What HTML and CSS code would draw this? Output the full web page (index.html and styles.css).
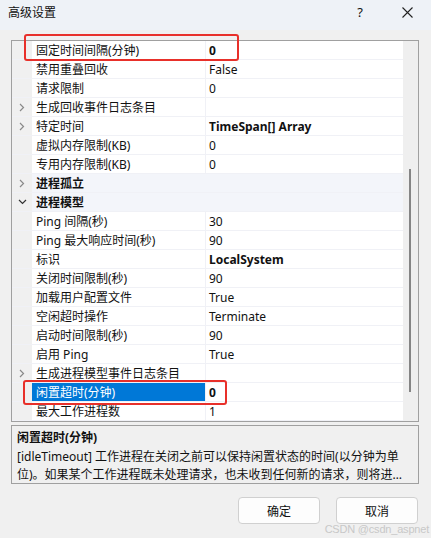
FILE: index.html
```html
<!DOCTYPE html>
<html>
<head>
<meta charset="utf-8">
<link rel="stylesheet" href="styles.css">
</head>
<body>
<div class="window">
  <div class="titlebar">
    <span class="title">高级设置</span>
    <span class="tb-help">?</span>
    <span class="tb-close"><svg width="11" height="11" viewBox="0 0 11 11"><path d="M0.5 0.5 L10.5 10.5 M10.5 0.5 L0.5 10.5" stroke="#222" stroke-width="1.1" fill="none"/></svg></span>
  </div>
  <div class="main">
    <div class="grid">
      <div class="rows">
        <div class="row"><span class="m"></span><span class="n">固定时间间隔(分钟)</span><span class="v b">0</span></div>
        <div class="row"><span class="m"></span><span class="n">禁用重叠回收</span><span class="v">False</span></div>
        <div class="row"><span class="m"></span><span class="n">请求限制</span><span class="v">0</span></div>
        <div class="row"><span class="m"><svg class="chev" width="6" height="9" viewBox="0 0 6 9"><path d="M1 1 L4.5 4.5 L1 8" stroke="#8a8a8a" stroke-width="1.2" fill="none"/></svg></span><span class="n">生成回收事件日志条目</span><span class="v"></span></div>
        <div class="row"><span class="m"><svg class="chev" width="6" height="9" viewBox="0 0 6 9"><path d="M1 1 L4.5 4.5 L1 8" stroke="#8a8a8a" stroke-width="1.2" fill="none"/></svg></span><span class="n">特定时间</span><span class="v b">TimeSpan[] Array</span></div>
        <div class="row"><span class="m"></span><span class="n">虚拟内存限制(KB)</span><span class="v">0</span></div>
        <div class="row"><span class="m"></span><span class="n">专用内存限制(KB)</span><span class="v">0</span></div>
        <div class="row cat"><span class="m"><svg class="chev" width="6" height="9" viewBox="0 0 6 9"><path d="M1 1 L4.5 4.5 L1 8" stroke="#8a8a8a" stroke-width="1.2" fill="none"/></svg></span><span class="c">进程孤立</span></div>
        <div class="row cat"><span class="m"><svg class="chev" width="9" height="6" viewBox="0 0 9 6"><path d="M1 1 L4.5 4.5 L8 1" stroke="#333" stroke-width="1.2" fill="none"/></svg></span><span class="c">进程模型</span></div>
        <div class="row"><span class="m"></span><span class="n">Ping 间隔(秒)</span><span class="v">30</span></div>
        <div class="row"><span class="m"></span><span class="n">Ping 最大响应时间(秒)</span><span class="v">90</span></div>
        <div class="row"><span class="m"></span><span class="n">标识</span><span class="v b">LocalSystem</span></div>
        <div class="row"><span class="m"></span><span class="n">关闭时间限制(秒)</span><span class="v">90</span></div>
        <div class="row"><span class="m"></span><span class="n">加载用户配置文件</span><span class="v">True</span></div>
        <div class="row"><span class="m"></span><span class="n">空闲超时操作</span><span class="v">Terminate</span></div>
        <div class="row"><span class="m"></span><span class="n">启动时间限制(秒)</span><span class="v">90</span></div>
        <div class="row"><span class="m"></span><span class="n">启用 Ping</span><span class="v">True</span></div>
        <div class="row"><span class="m"><svg class="chev" width="6" height="9" viewBox="0 0 6 9"><path d="M1 1 L4.5 4.5 L1 8" stroke="#8a8a8a" stroke-width="1.2" fill="none"/></svg></span><span class="n">生成进程模型事件日志条目</span><span class="v"></span></div>
        <div class="row sel"><span class="m"></span><span class="n">闲置超时(分钟)</span><span class="v b">0</span></div>
        <div class="row"><span class="m"></span><span class="n">最大工作进程数</span><span class="v">1</span></div>
      </div>
      <div class="scroll"><div class="thumb"></div></div>
    </div>
    <div class="desc">
      <div class="desc-title">闲置超时(分钟)</div>
      <div class="desc-text">[idleTimeout] 工作进程在关闭之前可以保持闲置状态的时间(以分钟为单位)。如果某个工作进程既未处理请求，也未收到任何新的请求，则将进…</div>
    </div>
    <div class="buttons">
      <button class="btn">确定</button>
      <button class="btn">取消</button>
    </div>
  </div>
  <div class="mark mark1"></div>
  <div class="mark mark2"></div>
  <div class="watermark">CSDN @csdn_aspnet</div>
</div>
</body>
</html>
```
FILE: styles.css
```css
* { box-sizing: border-box; }
html, body { margin: 0; padding: 0; }
body {
  width: 431px;
  height: 538px;
  background: #f0f0f0;
  font-family: "Noto Sans", "Noto Sans CJK SC", sans-serif;
  font-size: 12px;
  color: #111;
  overflow: hidden;
}
.window { position: relative; width: 431px; height: 538px; }
.titlebar {
  height: 30px;
  background: #eef2f7;
  display: flex;
  align-items: center;
  padding-left: 8px;
}
.title { flex: 1; font-size: 12px; color: #111; margin-top: -7px; }
.tb-help { width: 20px; text-align: center; font-size: 13px; margin-right: 25px; margin-top: -6px; }
.tb-close { width: 24px; margin-right: 12px; display: flex; justify-content: center; margin-top: -6px; }
.main { padding: 10px 12px 0 11px; }
.grid {
  border: 1px solid #a0a0a0;
  height: 382px;
  display: flex;
  background: #efefef;
}
.rows { width: 391px; background: #fff; }
.row {
  display: flex;
  height: 19px;
  line-height: 18px;
  padding-top: 1px;
  border-bottom: 1px solid #f0f1f6;
}
.m {
  width: 20px;
  background: #f0f0f0;
  display: flex;
  align-items: center;
  justify-content: center;
  flex: none;
  margin-top: -1px;
}
.n {
  width: 174px;
  flex: none;
  padding-left: 4px;
  border-right: 1px solid #f0f1f6;
  white-space: nowrap;
  overflow: hidden;
  margin-top: -1px;
  padding-top: 1px;
}
.v { flex: 1; padding-left: 3px; white-space: nowrap; }
.b { font-weight: bold; }
.cat { background: #f3f5fa; }
.cat .c { padding-left: 4px; font-weight: bold; }
.sel .n { background: #0078d7; color: #fff; }
.scroll { flex: 1; position: relative; }
.thumb {
  position: absolute;
  left: 6px;
  top: 128px;
  width: 2px;
  height: 223px;
  background: #858585;
}
.desc {
  margin-top: 3px;
  height: 59px;
  border: 1px solid #a0a0a0;
  padding: 3px 4px 0 5px;
  line-height: 18.5px;
}
.desc-title { font-weight: bold; }
.desc-text { width: 390px; }
.buttons {
  display: flex;
  justify-content: flex-end;
  gap: 16px;
  margin-top: 13px;
  padding-right: 1px;
}
.btn {
  width: 82px;
  height: 27px;
  border: 1px solid #d0d0d0;
  border-radius: 4px;
  background: #fdfdfd;
  font-family: "Noto Sans CJK SC", sans-serif;
  font-size: 12px;
  color: #111;
  padding: 0;
}
.mark {
  position: absolute;
  border: 2px solid #e8302a;
  border-radius: 3px;
}
.mark1 { left: 24px; top: 34px; width: 215px; height: 27px; }
.mark2 { left: 23px; top: 380px; width: 204px; height: 25px; }
.watermark {
  position: absolute;
  right: 2px;
  bottom: 3px;
  font-family: "Liberation Sans", sans-serif;
  font-size: 11px;
  color: #c8c8c8;
  letter-spacing: -0.2px;
}
```
